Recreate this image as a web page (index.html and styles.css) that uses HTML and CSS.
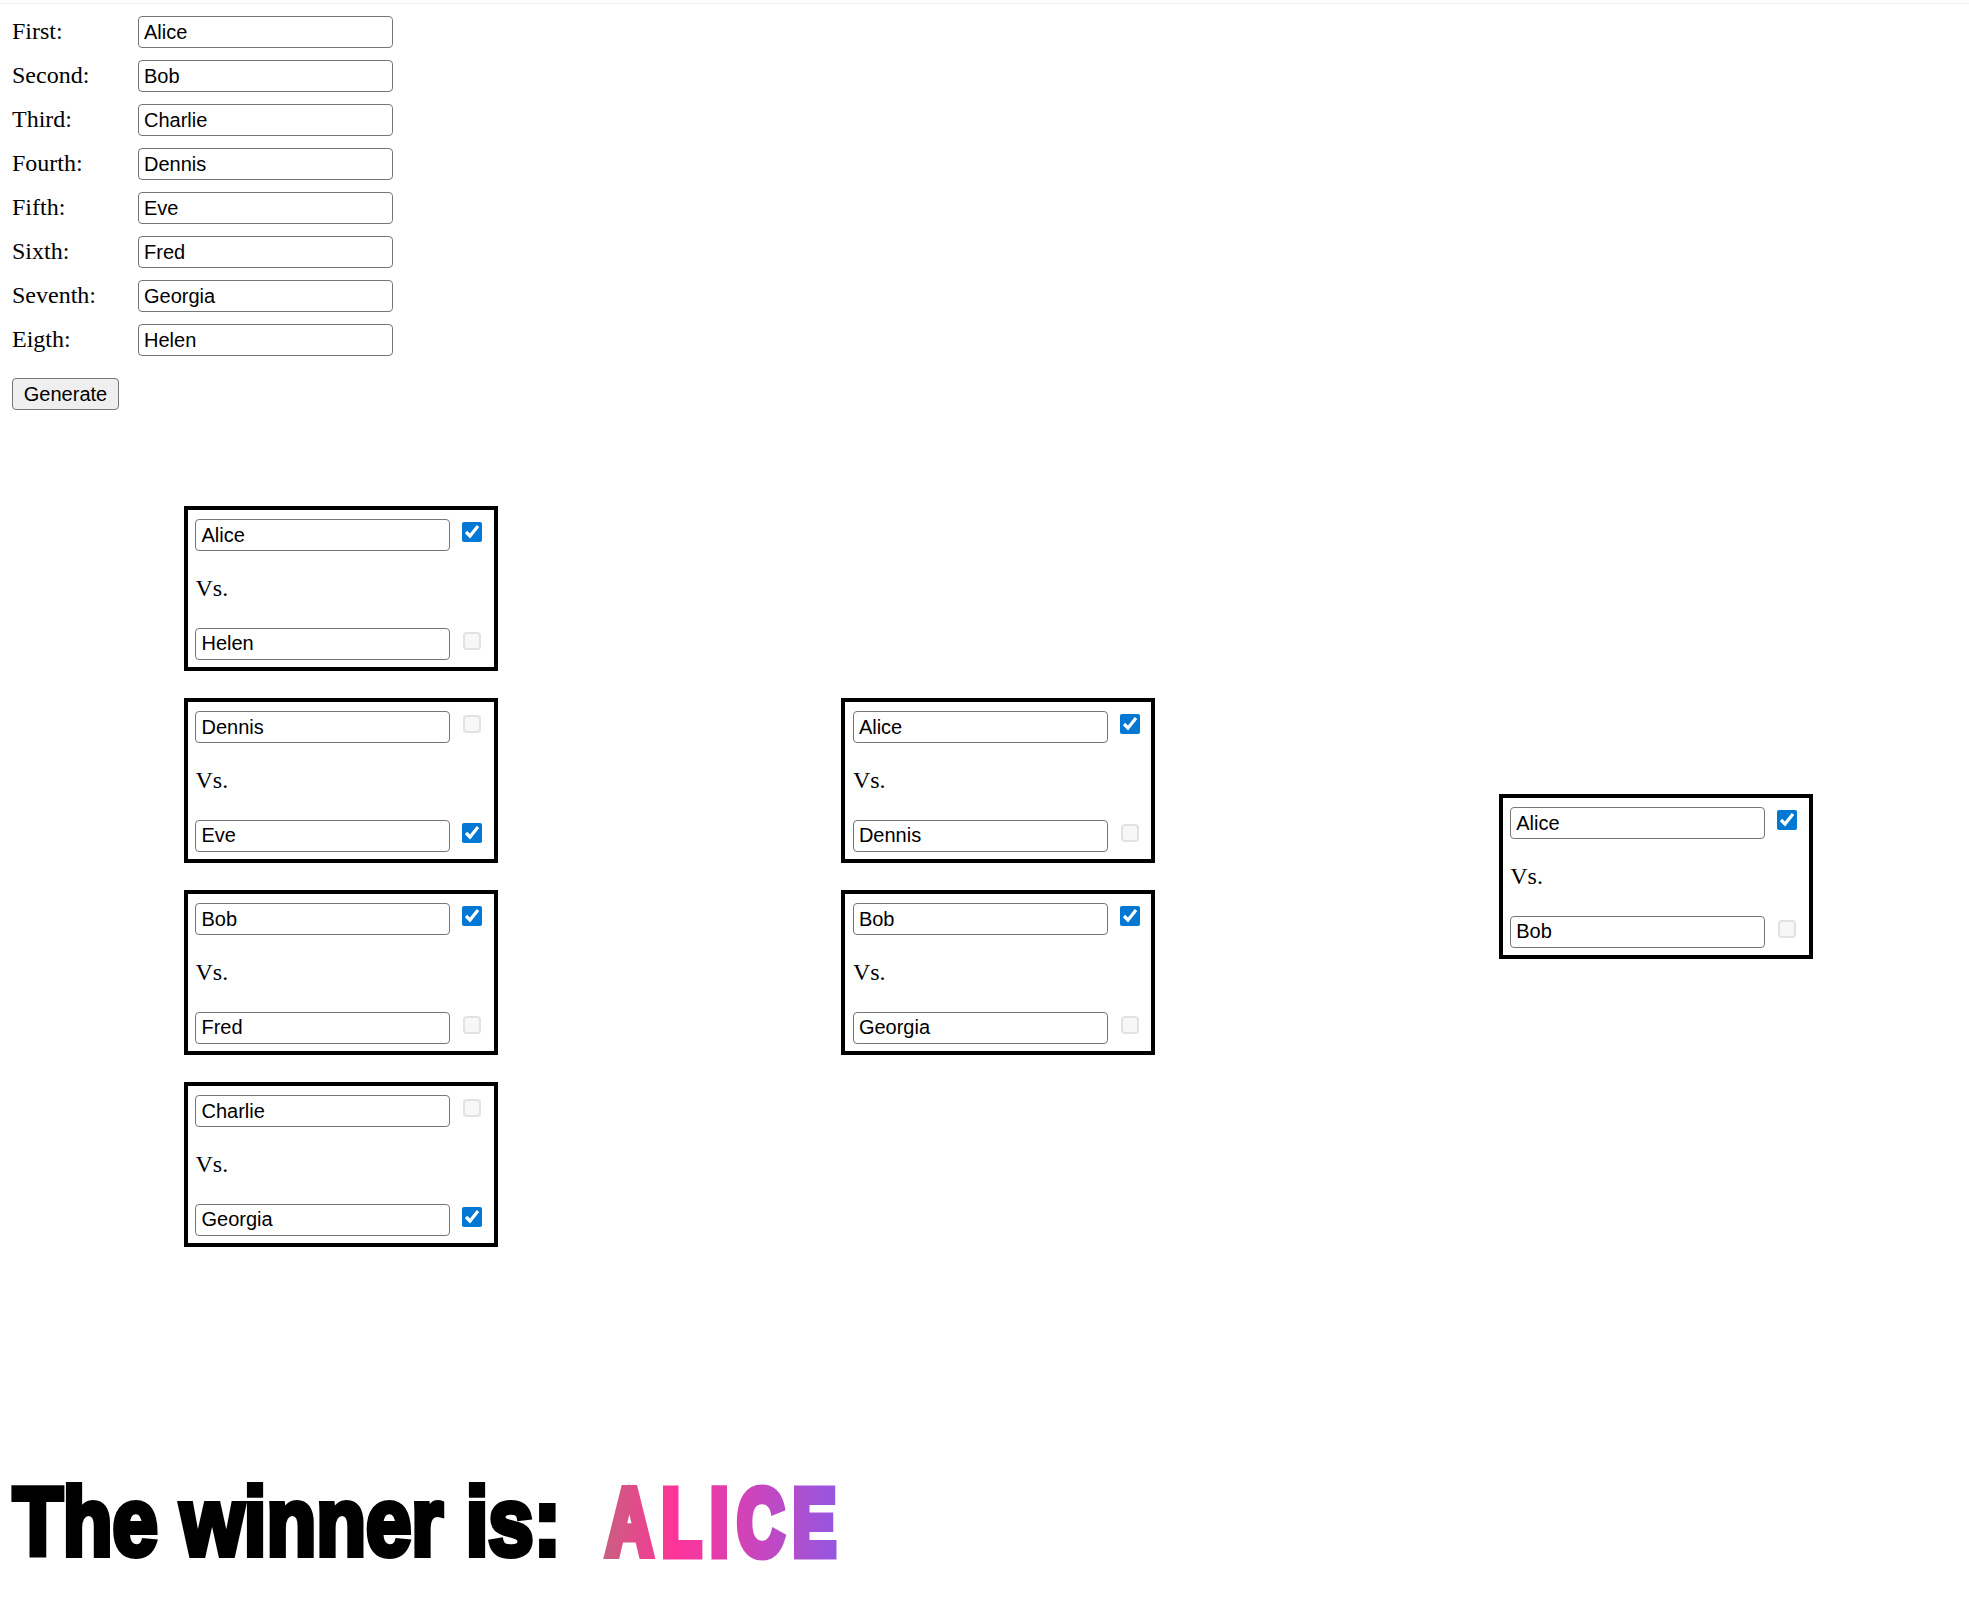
FILE: index.html
```html
<!DOCTYPE html>
<html lang="en">
<head>
  <meta charset="UTF-8">
  <meta name="viewport" content="width=device-width, initial-scale=1.0">
  <title>Bracket</title>
  <link rel="stylesheet" href="styles.css">
</head>
<body>
  <form class="entries">
    <div class="entry"><label>First:</label><input type="text" value="Alice"></div>
    <div class="entry"><label>Second:</label><input type="text" value="Bob"></div>
    <div class="entry"><label>Third:</label><input type="text" value="Charlie"></div>
    <div class="entry"><label>Fourth:</label><input type="text" value="Dennis"></div>
    <div class="entry"><label>Fifth:</label><input type="text" value="Eve"></div>
    <div class="entry"><label>Sixth:</label><input type="text" value="Fred"></div>
    <div class="entry"><label>Seventh:</label><input type="text" value="Georgia"></div>
    <div class="entry"><label>Eigth:</label><input type="text" value="Helen"></div>
    <button type="button" class="generate">Generate</button>
  </form>

  <div class="bracket">
    <div class="round">
      <div class="match">
        <div class="player"><input type="text" value="Alice"><input type="checkbox" checked></div>
        <p class="vs">Vs.</p>
        <div class="player"><input type="text" value="Helen"><input type="checkbox" disabled></div>
      </div>
      <div class="match">
        <div class="player"><input type="text" value="Dennis"><input type="checkbox" disabled></div>
        <p class="vs">Vs.</p>
        <div class="player"><input type="text" value="Eve"><input type="checkbox" checked></div>
      </div>
      <div class="match">
        <div class="player"><input type="text" value="Bob"><input type="checkbox" checked></div>
        <p class="vs">Vs.</p>
        <div class="player"><input type="text" value="Fred"><input type="checkbox" disabled></div>
      </div>
      <div class="match">
        <div class="player"><input type="text" value="Charlie"><input type="checkbox" disabled></div>
        <p class="vs">Vs.</p>
        <div class="player"><input type="text" value="Georgia"><input type="checkbox" checked></div>
      </div>
    </div>
    <div class="round">
      <div class="match">
        <div class="player"><input type="text" value="Alice"><input type="checkbox" checked></div>
        <p class="vs">Vs.</p>
        <div class="player"><input type="text" value="Dennis"><input type="checkbox" disabled></div>
      </div>
      <div class="match">
        <div class="player"><input type="text" value="Bob"><input type="checkbox" checked></div>
        <p class="vs">Vs.</p>
        <div class="player"><input type="text" value="Georgia"><input type="checkbox" disabled></div>
      </div>
    </div>
    <div class="round">
      <div class="match">
        <div class="player"><input type="text" value="Alice"><input type="checkbox" checked></div>
        <p class="vs">Vs.</p>
        <div class="player"><input type="text" value="Bob"><input type="checkbox" disabled></div>
      </div>
    </div>
  </div>

  <h1 class="winner">The winner is:<span class="winner-name">ALICE</span></h1>
</body>
</html>
```

FILE: styles.css
```css
body {
  margin: 0;
  padding-top: 3px;
  font-family: "Liberation Serif", serif;
  font-size: 24px;
  color: #000;
  background-color: white;
}

input[type="text"] {
  box-sizing: border-box;
  width: 255px;
  height: 32px;
  margin: 0;
  padding: 0 5px;
  font-family: "Liberation Sans", sans-serif;
  font-size: 20px;
  color: #000;
  border: 1px solid #767676;
  border-radius: 4px;
}

input[type="checkbox"] {
  flex: none;
  box-sizing: border-box;
  width: 20px;
  height: 20px;
  margin: 3px 0 0 12px;
  accent-color: #0078d4;
}

/* lighter box than the browser's own disabled look */
input[type="checkbox"]:disabled {
  appearance: none;
  width: 18px;
  height: 18px;
  margin: 4px 1px 0 13px;
  background-color: #f7f7f7;
  border: 2px solid #e2e2e2;
  border-radius: 4px;
}

.entries {
  border-top: 1px solid #eee;
  padding: 12px 0 0 12px;
}

.entry {
  display: flex;
  align-items: center;
  height: 32px;
  margin-bottom: 12px;
}

.entry label {
  width: 126px;
  margin-bottom: 2px;
}

.generate {
  display: block;
  box-sizing: border-box;
  width: 107px;
  height: 32px;
  margin-top: 22px;
  padding: 0;
  font-family: "Liberation Sans", sans-serif;
  font-size: 20px;
  color: #000;
  background-color: #efefef;
  border: 1px solid #767676;
  border-radius: 4px;
}

.bracket {
  display: grid;
  grid-template-columns: repeat(3, 314px);
  column-gap: 343.4px;
  margin: 96px 0 0 184px;
}

.round {
  display: flex;
  flex-direction: column;
  justify-content: center;
  gap: 27px;
}

.match {
  box-sizing: border-box;
  width: 314px;
  height: 165px;
  padding: 9px 7.3px;
  border: 4px solid #000;
}

.player {
  display: flex;
  align-items: flex-start;
}

.player input[type="text"] {
  padding: 0 5.2px;
}

.vs {
  margin: 0;
  height: 76.6px;
  line-height: 75px;
  padding-left: 0.2px;
}

.winner {
  margin: 212px 0 0 13px;
  font-family: "Liberation Sans", sans-serif;
  font-size: 97px;
  font-weight: 700;
  line-height: 126px;
  white-space: nowrap;
  -webkit-text-stroke: 6px #000;
  transform: scaleX(0.84);
  transform-origin: left;
}

.winner-name {
  display: inline-block;
  margin-left: 49px;
  padding: 0 6px;
  font-size: 94px;
  letter-spacing: 13px;
  background: linear-gradient(to right, #c8607f 0%, #ff3399 30%, #8c5ae6 100%);
  -webkit-background-clip: text;
  background-clip: text;
  color: transparent;
  -webkit-text-stroke: 9px transparent;
  transform: scaleX(0.82);
  transform-origin: left;
}
```
